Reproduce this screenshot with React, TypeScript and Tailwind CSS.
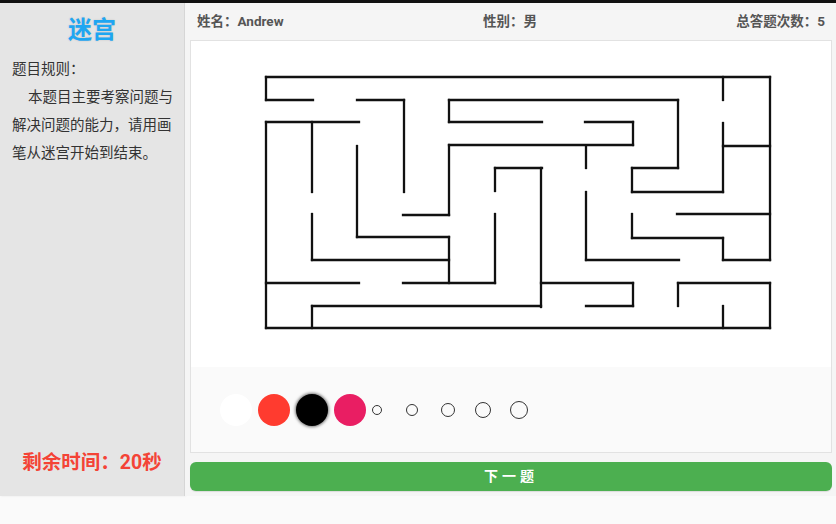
import React from 'react';

// maze walls, in page coordinates (the svg viewBox is offset to match)
const walls: [number, number, number, number][] = [
  [266, 77, 770, 77],
  [770, 77, 770, 260],
  [770, 283, 770, 328],
  [266, 328, 770, 328],
  [266, 77, 266, 100],
  [266, 122, 266, 328],
  [266, 100, 313, 100],
  [357, 100, 404, 100],
  [404, 100, 404, 192],
  [449, 100, 678, 100],
  [678, 100, 678, 168],
  [632, 168, 678, 168],
  [632, 168, 632, 192],
  [632, 192, 723, 192],
  [449, 100, 449, 122],
  [449, 122, 542, 122],
  [585, 122, 633, 122],
  [633, 122, 633, 145],
  [449, 145, 633, 145],
  [449, 145, 449, 215],
  [403, 215, 449, 215],
  [586, 146, 586, 168],
  [586, 192, 586, 260],
  [586, 260, 679, 260],
  [723, 77, 723, 100],
  [723, 123, 723, 192],
  [723, 146, 770, 146],
  [495, 168, 542, 168],
  [495, 168, 495, 191],
  [541, 168, 541, 307],
  [312, 306, 541, 306],
  [312, 306, 312, 328],
  [541, 283, 633, 283],
  [633, 283, 633, 306],
  [586, 306, 633, 306],
  [678, 283, 770, 283],
  [678, 283, 678, 306],
  [723, 306, 723, 328],
  [723, 260, 770, 260],
  [723, 238, 723, 260],
  [632, 238, 723, 238],
  [632, 214, 632, 238],
  [677, 214, 770, 214],
  [266, 122, 359, 122],
  [312, 122, 312, 192],
  [357, 146, 357, 237],
  [357, 237, 449, 237],
  [449, 237, 449, 283],
  [403, 283, 495, 283],
  [495, 214, 495, 283],
  [312, 214, 312, 260],
  [312, 260, 449, 260],
  [266, 283, 359, 283],
];

const sizes = [
  { d: 10, ml: 'ml-[6px]' },
  { d: 12, ml: 'ml-[24px]' },
  { d: 14, ml: 'ml-[23px]' },
  { d: 16, ml: 'ml-[20px]' },
  { d: 18, ml: 'ml-[19px]' },
];

export default function App() {
  const font = { fontFamily: 'Roboto, "Noto Sans CJK SC", sans-serif' };

  return (
    <div className="w-[836px] h-[524px] bg-[#fafafa] flex flex-col overflow-hidden" style={font}>
      <div className="h-[3px] bg-[#111111]" />

      <div className="h-[493px] flex">
        {/* Left panel */}
        <aside className="w-[185px] bg-[#e5e5e5] border-r border-[#d6d6d6] shadow-[1px_0_2px_rgba(0,0,0,0.08)] flex flex-col pt-[9px] pb-[19px]">
          <h1 className="text-center text-[24px] leading-[36px] font-bold text-[#1ea6f2] [text-shadow:0_0_2px_rgba(0,0,0,0.15)]">
            迷宫
          </h1>
          <div className="mt-[8px] pl-[12px] text-[14.5px] leading-[28px] text-[#333333] whitespace-nowrap">
            <p>题目规则：</p>
            <p className="pl-[16px]">本题目主要考察问题与</p>
            <p>解决问题的能力，请用画</p>
            <p>笔从迷宫开始到结束。</p>
          </div>
          <div className="mt-auto text-center text-[19.5px] leading-[28px] font-bold text-[#f44336]">
            剩余时间：20秒
          </div>
        </aside>

        {/* Right area */}
        <main className="flex-1 bg-[#f5f5f5] pl-[5px] pr-[4px] flex flex-col">
          <div className="h-[37px] px-[7px] flex items-center justify-between text-[13.5px] font-bold text-[#555555]">
            <span>姓名：Andrew</span>
            <span>性别：男</span>
            <span>总答题次数：5</span>
          </div>

          <div className="h-[413px] border border-[#e2e2e2] bg-white flex flex-col">
            <div className="h-[326px] bg-white">
              <svg width="640" height="326" viewBox="191 41 640 326">
                {walls.map(([x1, y1, x2, y2], i) => (
                  <line
                    key={i}
                    x1={x1}
                    y1={y1}
                    x2={x2}
                    y2={y2}
                    stroke="#111"
                    strokeWidth={2.3}
                    strokeLinecap="square"
                  />
                ))}
              </svg>
            </div>
            <div className="flex-1 bg-[#fafafa] flex items-center pl-[29px]">
              <div className="w-[32px] h-[32px] rounded-full bg-white" />
              <div className="ml-[6px] w-[32px] h-[32px] rounded-full bg-[#ff3b2f]" />
              <div className="ml-[6px] w-[32px] h-[32px] rounded-full bg-black shadow-[0_0_3px_1px_#777]" />
              <div className="ml-[6px] w-[32px] h-[32px] rounded-full bg-[#e91e63]" />
              {sizes.map((s) => (
                <div
                  key={s.d}
                  className={`${s.ml} rounded-full border border-[#333333]`}
                  style={{ width: s.d, height: s.d }}
                />
              ))}
            </div>
          </div>

          <button className="mt-[9px] h-[29px] rounded-[6px] bg-[#4caf50] text-white text-[14px] font-bold tracking-[4px] shadow-[0_1px_1px_rgba(0,0,0,0.1)]">
            下一题
          </button>
        </main>
      </div>
    </div>
  );
}
